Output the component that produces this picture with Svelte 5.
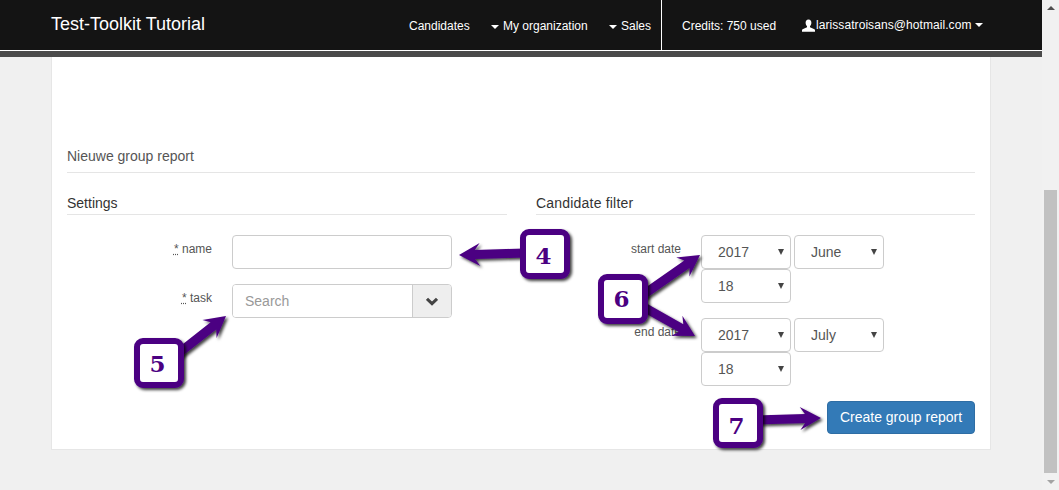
<script>
  const years = ['2016', '2017', '2018'];
  const months = ['May', 'June', 'July'];
  const days = ['17', '18', '19'];

  const dates = [
    { label: 'start date', year: '2017', month: 'June', day: '18' },
    { label: 'end date', year: '2017', month: 'July', day: '18' }
  ];

  // dy makes up for the old-style figures of the original font
  const callouts = [
    { n: 4, x: 520, y: 229, dy: 1 },
    { n: 5, x: 134, y: 338, dy: 0 },
    { n: 6, x: 598, y: 274, dy: -1 },
    { n: 7, x: 713, y: 398, dy: 2 }
  ];

  // tail x/y, tip x/y
  const arrows = [
    [525, 253, 459, 255],
    [175, 356, 226, 316],
    [640, 297, 700, 255],
    [640, 305, 695, 336],
    [755, 420, 821, 418]
  ];

  function arrowPoints([x1, y1, x2, y2]) {
    const len = Math.hypot(x2 - x1, y2 - y1);
    const ux = (x2 - x1) / len;
    const uy = (y2 - y1) / len;
    const at = (along, side) =>
      (x1 + ux * along - uy * side).toFixed(1) + ',' + (y1 + uy * along + ux * side).toFixed(1);
    const neck = len - 16;
    const barb = len - 21;
    return [
      at(0, -4.5), at(neck, -4.5), at(barb, -11.5), at(len, 0),
      at(barb, 11.5), at(neck, 4.5), at(0, 4.5)
    ].join(' ');
  }
</script>

<div class="window">
  <div class="page">
    <nav class="topbar">
      <a class="brand" href="#top">Test-Toolkit Tutorial</a>
      <ul class="menu">
        <li class="candidates">Candidates</li>
        <li class="org"><span class="caret"></span>My organization</li>
        <li class="sales"><span class="caret"></span>Sales</li>
      </ul>
      <ul class="account">
        <li class="credits">Credits: 750 used</li>
        <li class="user">
          <svg class="user-icon" viewBox="0 0 14 14" width="13" height="13" aria-hidden="true">
            <path d="M7 0.5C4.9 0.5 3.9 2.1 3.9 4c0 1.5 0.6 2.9 1.5 3.7v1.2L0.6 11.1C0.2 11.3 0 11.7 0 12.2V13.6h14v-1.4c0-0.5-0.2-0.9-0.6-1.1L8.6 8.9V7.7C9.5 6.9 10.1 5.5 10.1 4 10.1 2.1 9.1 0.5 7 0.5z" fill="#fff" />
          </svg>
          <span class="email">larissatroisans@hotmail.com</span><span class="caret after"></span>
        </li>
      </ul>
    </nav>
    <div class="subbar"></div>

    <main class="card">
      <h2 class="card-title">Nieuwe group report</h2>
      <div class="columns">
        <section>
          <h3>Settings</h3>
          <div class="row">
            <label for="name"><abbr title="required">*</abbr> name</label>
            <input id="name" class="control" type="text" />
          </div>
          <div class="row">
            <label for="task"><abbr title="required">*</abbr> task</label>
            <div class="combo">
              <input id="task" type="text" placeholder="Search" />
              <button type="button" aria-label="Open">
                <svg viewBox="0 0 12 9" width="12" height="9" aria-hidden="true">
                  <path d="M1 1.8 6 6.6l5-4.8" fill="none" stroke="#444" stroke-width="3" />
                </svg>
              </button>
            </div>
          </div>
        </section>

        <section>
          <h3 class="wide">Candidate filter</h3>
          {#each dates as d}
            <div class="row">
              <span class="label">{d.label}</span>
              <div class="date">
                <div class="select">
                  <select value={d.year}>
                    {#each years as y}<option>{y}</option>{/each}
                  </select>
                </div>
                <div class="select">
                  <select value={d.month}>
                    {#each months as m}<option>{m}</option>{/each}
                  </select>
                </div>
                <div class="select">
                  <select value={d.day}>
                    {#each days as v}<option>{v}</option>{/each}
                  </select>
                </div>
              </div>
            </div>
          {/each}
          <div class="actions">
            <button type="button" class="primary">Create group report</button>
          </div>
        </section>
      </div>
    </main>
  </div>

  <aside class="scrollbar">
    <span class="up"></span>
    <div class="thumb"></div>
    <span class="down"></span>
  </aside>

  <svg class="annotations" width="1059" height="490" viewBox="0 0 1059 490" aria-hidden="true">
    <defs>
      <filter id="shade" x="-20%" y="-20%" width="150%" height="150%">
        <feDropShadow dx="2" dy="2" stdDeviation="1.4" flood-color="#000" flood-opacity="0.75" />
      </filter>
    </defs>
    <g filter="url(#shade)">
      {#each arrows as a}
        <polygon points={arrowPoints(a)} fill="#4b0082" />
      {/each}
    </g>
    {#each callouts as c}
      <rect class="box" x={c.x + 3} y={c.y + 3} width="44" height="44" rx="6" filter="url(#shade)" />
      <text class="num" x={c.x + 23.5} y={c.y + 34 + c.dy} text-anchor="middle">{c.n}</text>
    {/each}
  </svg>
</div>

<style>
  :global(body) {
    margin: 0;
    background: #f0f0f0;
  }

  .window {
    position: relative;
    display: flex;
    width: 1059px;
    height: 490px;
    overflow: hidden;
    font-family: "Liberation Sans", Arial, sans-serif;
    font-size: 14px;
    color: #555;
  }

  .page {
    width: 1042px;
    flex: none;
  }

  .topbar {
    display: flex;
    align-items: stretch;
    height: 50px;
    background: #141414;
    color: #fff;
    font-size: 12px;
    border-bottom: 1px solid #fff;
  }
  .brand {
    margin-left: 51px;
    width: 358px;
    color: #fff;
    font-size: 18px;
    line-height: 48px;
    text-decoration: none;
  }
  .menu, .account {
    display: flex;
    margin: 0;
    padding: 0;
    list-style: none;
    line-height: 52px;
    white-space: nowrap;
  }
  .menu {
    width: 252px;
    border-right: 1px solid #fff;
  }
  .candidates { width: 82px; }
  .org { width: 118px; }
  .credits {
    margin-left: 20px;
    width: 120px;
  }
  .user {
    display: flex;
    align-items: center;
  }
  .user-icon { margin-right: 1px; }
  .email { letter-spacing: 0.07px; }
  .caret {
    display: inline-block;
    width: 0;
    height: 0;
    margin-right: 4px;
    vertical-align: middle;
    border-top: 4px solid #fff;
    border-left: 4px solid transparent;
    border-right: 4px solid transparent;
  }
  .caret.after {
    margin: 0 0 0 4px;
  }

  .subbar {
    height: 6px;
    background: #4a4a4a;
  }

  .card {
    box-sizing: border-box;
    width: 940px;
    height: 393px;
    margin-left: 51px;
    padding: 91px 15px 0;
    background: #fff;
    border: 1px solid #e6e6e6;
    border-top: 0;
  }
  .card-title {
    margin: 0 0 22px;
    padding-bottom: 8px;
    font-size: 14px;
    line-height: 16px;
    font-weight: 400;
    color: #555;
    border-bottom: 1px solid #e5e5e5;
  }
  .columns {
    display: grid;
    grid-template-columns: 440px 439px;
    column-gap: 29px;
  }
  h3 {
    margin: 0 0 20px;
    padding-bottom: 2px;
    font-size: 14px;
    line-height: 17px;
    font-weight: 400;
    color: #333;
    border-bottom: 1px solid #e5e5e5;
  }
  h3.wide { letter-spacing: 0.2px; }

  .row {
    display: flex;
    margin-bottom: 15px;
  }
  .row label, .label {
    box-sizing: border-box;
    width: 145px;
    margin-right: 20px;
    padding-top: 7px;
    text-align: right;
    font-size: 12px;
    line-height: 14px;
    color: #555;
  }
  abbr {
    text-decoration: underline dotted;
  }

  .control, .combo {
    box-sizing: border-box;
    width: 220px;
    height: 34px;
    border: 1px solid #ccc;
    border-radius: 4px;
    background: #fff;
  }
  .combo {
    display: flex;
    overflow: hidden;
  }
  .combo input {
    flex: 1;
    min-width: 0;
    padding: 0 12px;
    border: 0;
    outline: 0;
    font: inherit;
    color: #555;
  }
  .combo input::placeholder {
    color: #999;
    opacity: 1;
  }
  .combo button {
    width: 39px;
    padding: 0;
    border: 0;
    border-left: 1px solid #ccc;
    background: #eee;
  }

  .date {
    display: flex;
    flex-wrap: wrap;
    column-gap: 3px;
    width: 190px;
  }
  .select {
    position: relative;
    width: 90px;
    height: 34px;
  }
  .select::after {
    content: "";
    position: absolute;
    right: 7px;
    top: 14px;
    border-top: 6px solid #444;
    border-left: 3px solid transparent;
    border-right: 3px solid transparent;
    pointer-events: none;
  }
  select {
    box-sizing: border-box;
    width: 100%;
    height: 100%;
    padding: 0 16px;
    border: 1px solid #ccc;
    border-radius: 4px;
    background: #fff;
    font: inherit;
    color: #555;
    appearance: none;
  }

  .actions {
    display: flex;
    justify-content: flex-end;
  }
  .primary {
    box-sizing: border-box;
    width: 148px;
    height: 33px;
    padding: 0 0 2px;
    border: 1px solid #2e6da4;
    border-radius: 4px;
    background: #337ab7;
    color: #fff;
    font: inherit;
  }

  .scrollbar {
    position: relative;
    flex: 1;
    background: #f1f1f1;
  }
  .thumb {
    position: absolute;
    left: 2px;
    right: 2px;
    top: 190px;
    height: 283px;
    background: #c1c1c1;
  }
  .up, .down {
    position: absolute;
    left: 5px;
    border-left: 4px solid transparent;
    border-right: 4px solid transparent;
  }
  .up {
    top: 6px;
    border-bottom: 4px solid #505050;
  }
  .down {
    bottom: 6px;
    border-top: 4px solid #a3a3a3;
  }

  .annotations {
    position: absolute;
    left: 0;
    top: 0;
    pointer-events: none;
  }
  .box {
    fill: #fff;
    stroke: #4b0082;
    stroke-width: 6;
  }
  .num {
    font-family: "DejaVu Serif", "Liberation Serif", serif;
    font-size: 23px;
    font-weight: 700;
    fill: #4b0082;
  }
</style>
